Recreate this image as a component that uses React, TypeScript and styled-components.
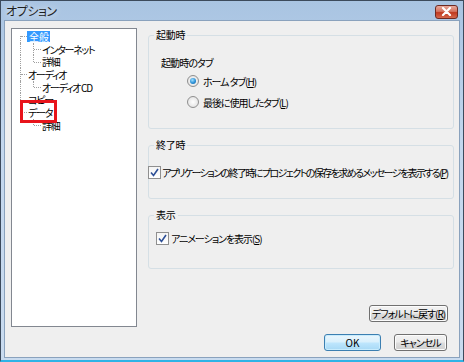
import React from "react";
import styled, { createGlobalStyle, css } from "styled-components";

const GlobalStyle = createGlobalStyle`
  html, body {
    margin: 0;
    padding: 0;
    background: #ffffff;
  }
  body {
    font-family: "Noto Sans CJK JP", "Liberation Sans", sans-serif;
    font-size: 10px;
    color: #000;
  }
`;

const Window = styled.div`
  box-sizing: border-box;
  width: 464px;
  height: 362px;
  display: flex;
  flex-direction: column;
  border: 1px solid #3c4a5c;
  border-bottom: 2px solid #2fb3e6;
  background: linear-gradient(180deg, #a9c4e2 0%, #c3d7ee 40%, #c9dbef 100%);
  padding: 0 3px 2px 3px;
`;

const TitleBar = styled.div`
  height: 19px;
  display: flex;
  align-items: center;
  justify-content: space-between;
  padding: 0 2px 0 2px;
`;

const Title = styled.span`
  font-size: 12px;
  color: #1e1e1e;
  font-feature-settings: "palt";
  letter-spacing: -0.4px;
  text-shadow: 0 0 6px #ffffff;
`;

const CloseButton = styled.div`
  box-sizing: border-box;
  width: 23px;
  height: 14px;
  margin-top: 2px;
  border: 1px solid #6e2a22;
  border-radius: 3px;
  background: linear-gradient(180deg, #e9a99c 0%, #d4735f 45%, #c0391f 55%, #d4684d 100%);
  display: flex;
  align-items: center;
  justify-content: center;
`;

const Client = styled.div`
  flex: 1;
  display: flex;
  flex-direction: column;
  border: 1px solid #8aa2bd;
  background: #efefef;
  padding: 7px 6px 0 6px;
  min-height: 0;
`;

const MainRow = styled.div`
  display: flex;
  gap: 11px;
`;

const Tree = styled.div`
  position: relative;
  box-sizing: border-box;
  flex: none;
  width: 126px;
  height: 299px;
  background: #ffffff;
  border: 1px solid #828790;
  padding: 1px 0 0 2px;
`;

const TreeRow = styled.div`
  display: flex;
  align-items: center;
  height: 12.7px;
  white-space: nowrap;
`;

const Guide = styled.span<{ $v: "full" | "top" | "none" | "mid"; $h?: boolean; $w?: number }>`
  position: relative;
  flex: none;
  width: ${(p) => p.$w ?? 13}px;
  height: 100%;
  &::before {
    content: "";
    position: absolute;
    left: 6px;
    border-left: 1px dotted #a0a0a0;
    ${(p) =>
      p.$v === "full" &&
      css`
        top: 0;
        bottom: 0;
      `}
    ${(p) =>
      p.$v === "top" &&
      css`
        top: 0;
        height: 50%;
      `}
    ${(p) =>
      p.$v === "mid" &&
      css`
        top: 50%;
        bottom: 0;
      `}
    ${(p) => p.$v === "none" && css`display: none;`}
  }
  &::after {
    content: "";
    position: absolute;
    left: 7px;
    right: 0;
    top: 50%;
    border-top: 1px dotted #a0a0a0;
    display: ${(p) => (p.$h ? "block" : "none")};
  }
`;

const TreeLabel = styled.span<{ $selected?: boolean }>`
  font-size: 10px;
  line-height: 11px;
  padding: 0 1px;
  font-feature-settings: "palt";
  letter-spacing: -1.3px;
  ${(p) =>
    p.$selected &&
    css`
      background: #3399ff;
      color: #ffffff;
      letter-spacing: 0;
      padding: 0 1px 0 2px;
    `}
`;

const Marker = styled.div`
  position: absolute;
  left: 8px;
  top: 71px;
  width: 37px;
  height: 23px;
  box-sizing: border-box;
  border: 3px solid #e8141b;
`;

const RightColumn = styled.div`
  flex: none;
  width: 306px;
  min-width: 0;
  display: flex;
  flex-direction: column;
  padding-bottom: 5px;
`;

const Group = styled.fieldset<{ $height: number }>`
  box-sizing: border-box;
  margin: 0 0 9px 0;
  padding: 0;
  height: ${(p) => p.$height}px;
  border: 1px solid #d5dfe5;
  border-radius: 3px;
  min-width: 0;
`;

const Legend = styled.legend`
  margin-left: 5px;
  padding: 0 2px;
  height: 14px;
  line-height: 14px;
  font-size: 10px;
  font-feature-settings: "palt";
  letter-spacing: -0.2px;
`;

const SubLabel = styled.div`
  margin: 11px 0 0 12px;
  height: 18px;
  display: flex;
  align-items: center;
  font-feature-settings: "palt";
  letter-spacing: -0.9px;
`;

const OptionRow = styled.label<{ $indent: number; $top: number; $gap?: number; $ls?: number }>`
  display: flex;
  align-items: center;
  gap: ${(p) => p.$gap ?? 2}px;
  margin: ${(p) => p.$top}px 0 0 ${(p) => p.$indent}px;
  height: 16px;
  white-space: nowrap;
  font-feature-settings: "palt";
  letter-spacing: ${(p) => p.$ls ?? -1.05}px;
`;

const Radio = styled.span<{ $checked?: boolean }>`
  box-sizing: border-box;
  flex: none;
  width: 12px;
  height: 12px;
  border-radius: 50%;
  border: 1px solid #8f8f8f;
  background: radial-gradient(circle at 50% 50%, #ffffff 0%, #e6e6e6 70%, #d4d4d4 100%);
  display: flex;
  align-items: center;
  justify-content: center;
  &::after {
    content: "";
    width: 6px;
    height: 6px;
    border-radius: 50%;
    background: radial-gradient(circle at 40% 35%, #9fe0ff 0%, #2a8fd6 55%, #115e9a 100%);
    display: ${(p) => (p.$checked ? "block" : "none")};
  }
`;

const CheckBox = styled.span`
  box-sizing: border-box;
  flex: none;
  width: 13px;
  height: 13px;
  border: 1px solid #8f8f8f;
  background: linear-gradient(180deg, #f4f4f4 0%, #ffffff 100%);
  display: flex;
  align-items: center;
  justify-content: center;
`;

const Spacer = styled.div`
  flex: 1;
`;

const ButtonRow = styled.div<{ $top?: number }>`
  display: flex;
  justify-content: flex-end;
  gap: 13px;
  padding-right: 6px;
  margin-top: ${(p) => p.$top ?? 0}px;
`;

const Button = styled.button<{ $width: number; $default?: boolean }>`
  box-sizing: border-box;
  width: ${(p) => p.$width}px;
  height: 17px;
  padding: 0;
  border: 1px solid #707070;
  border-radius: 3px;
  font-family: "Noto Sans CJK JP", "Liberation Sans", sans-serif;
  font-size: 10px;
  line-height: 14px;
  white-space: nowrap;
  color: #000;
  font-feature-settings: "palt";
  letter-spacing: -1px;
  background: linear-gradient(180deg, #f2f2f2 0%, #ebebeb 48%, #dddddd 52%, #cfcfcf 100%);
  box-shadow: inset 0 0 0 1px #fcfcfc;
  ${(p) =>
    p.$default &&
    css`
      letter-spacing: 0;
      border-color: #3c7fb1;
      background: linear-gradient(180deg, #eaf6fd 0%, #d9f0fc 48%, #bee6fd 52%, #a7d9f5 100%);
      box-shadow: inset 0 0 0 1px #c8ecfd;
    `}
`;

const CheckMark = () => (
  <svg width="9" height="9" viewBox="0 0 9 9">
    <path d="M1 4.5 L3.5 7.5 L8 1" fill="none" stroke="#2d4f96" strokeWidth="1.6" />
  </svg>
);

const CloseGlyph = () => (
  <svg width="11" height="9" viewBox="0 0 11 9">
    <path d="M2 1 L9 8 M9 1 L2 8" stroke="#ffffff" strokeWidth="2.2" strokeLinecap="round" />
  </svg>
);

export default function App() {
  return (
    <>
      <GlobalStyle />
      <Window>
        <TitleBar>
          <Title>オプション</Title>
          <CloseButton>
            <CloseGlyph />
          </CloseButton>
        </TitleBar>
        <Client>
          <MainRow>
            <Tree>
              <TreeRow>
                <Guide $v="mid" $h />
                <TreeLabel $selected>全般</TreeLabel>
              </TreeRow>
              <TreeRow>
                <Guide $v="full" />
                <Guide $v="full" $h $w={14} />
                <TreeLabel>インターネット</TreeLabel>
              </TreeRow>
              <TreeRow>
                <Guide $v="full" />
                <Guide $v="top" $h $w={14} />
                <TreeLabel>詳細</TreeLabel>
              </TreeRow>
              <TreeRow>
                <Guide $v="full" $h />
                <TreeLabel>オーディオ</TreeLabel>
              </TreeRow>
              <TreeRow>
                <Guide $v="full" />
                <Guide $v="top" $h $w={14} />
                <TreeLabel>オーディオ CD</TreeLabel>
              </TreeRow>
              <TreeRow>
                <Guide $v="full" $h />
                <TreeLabel>コピー</TreeLabel>
              </TreeRow>
              <TreeRow>
                <Guide $v="top" $h />
                <TreeLabel>データ</TreeLabel>
              </TreeRow>
              <TreeRow>
                <Guide $v="none" />
                <Guide $v="top" $h $w={14} />
                <TreeLabel>詳細</TreeLabel>
              </TreeRow>
              <Marker />
            </Tree>
            <RightColumn>
              <Group $height={101}>
                <Legend>起動時</Legend>
                <SubLabel>起動時のタブ</SubLabel>
                <OptionRow $indent={38} $top={2} $gap={4}>
                  <Radio $checked />
                  <span>
                    ホーム タブ(<u>H</u>)
                  </span>
                </OptionRow>
                <OptionRow $indent={38} $top={5} $gap={4}>
                  <Radio />
                  <span>
                    最後に使用したタブ(<u>L</u>)
                  </span>
                </OptionRow>
              </Group>
              <Group $height={61}>
                <Legend>終了時</Legend>
                <OptionRow $indent={-1} $top={12} $gap={1} $ls={-1.6}>
                  <CheckBox>
                    <CheckMark />
                  </CheckBox>
                  <span>
                    アプリケーションの終了時にプロジェクトの保存を求めるメッセージを表示する(<u>P</u>)
                  </span>
                </OptionRow>
              </Group>
              <Group $height={61}>
                <Legend>表示</Legend>
                <OptionRow $indent={7} $top={8}>
                  <CheckBox>
                    <CheckMark />
                  </CheckBox>
                  <span>
                    アニメーションを表示(<u>S</u>)
                  </span>
                </OptionRow>
              </Group>
              <Spacer />
              <ButtonRow>
                <Button $width={79}>
                  デフォルトに戻す(<u>R</u>)
                </Button>
              </ButtonRow>
            </RightColumn>
          </MainRow>
          <ButtonRow $top={7}>
            <Button $width={57} $default>
              OK
            </Button>
            <Button $width={53}>キャンセル</Button>
          </ButtonRow>
        </Client>
      </Window>
    </>
  );
}
